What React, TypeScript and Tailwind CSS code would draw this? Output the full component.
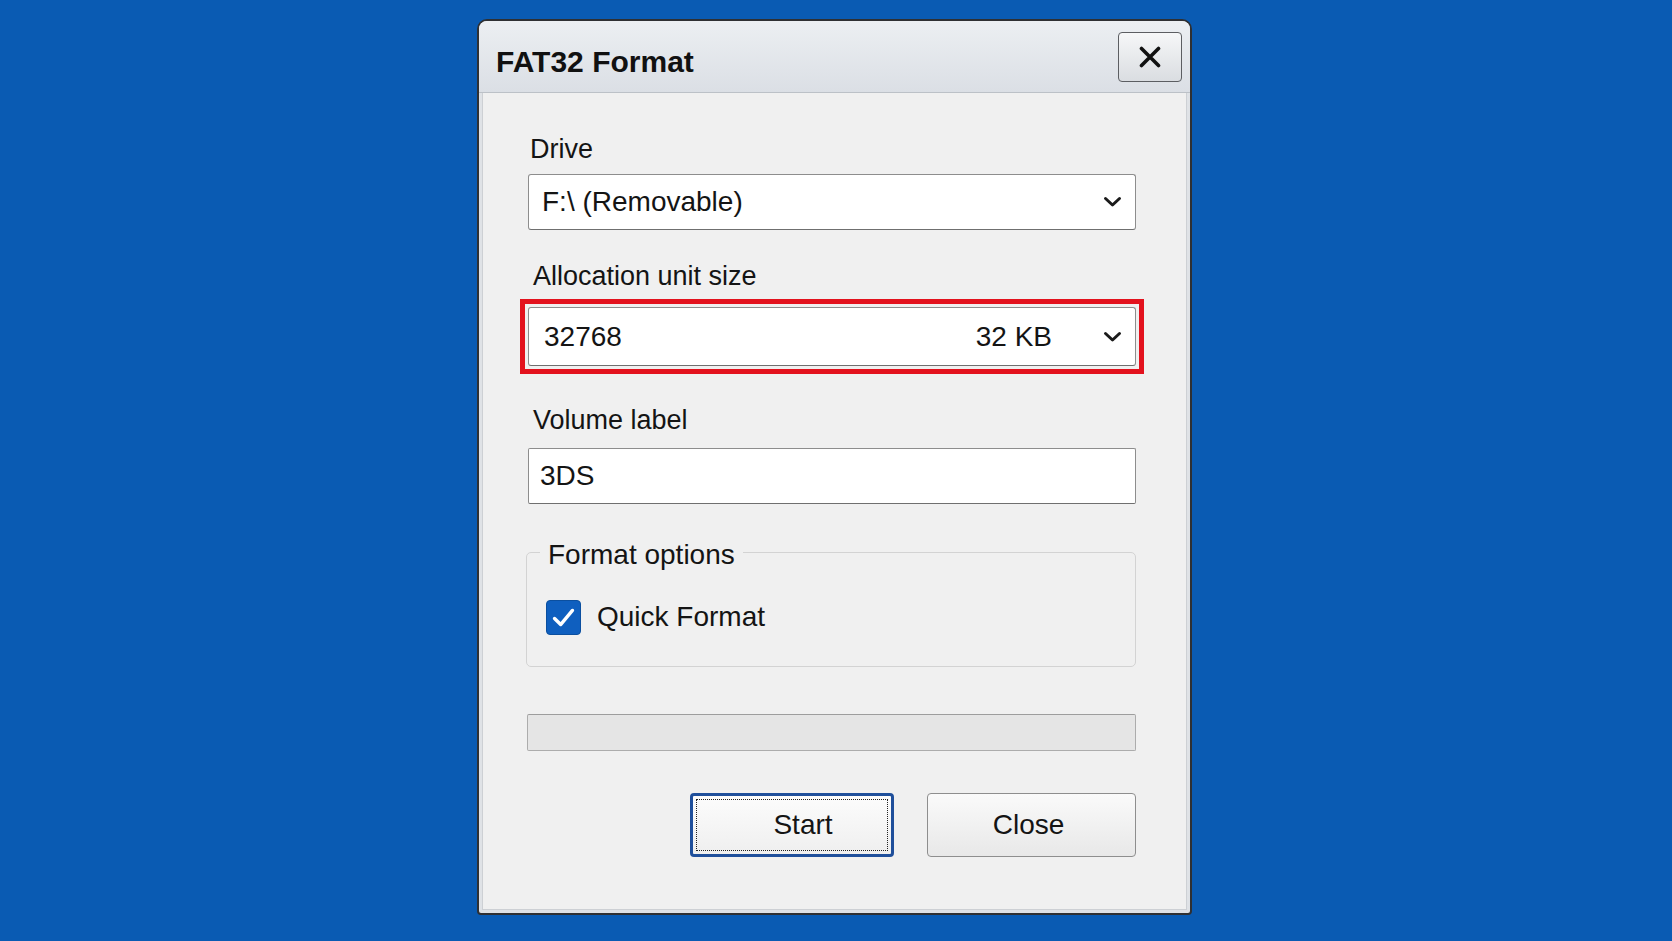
import React from 'react'

// FAT32 Format dialog on a blue desktop

function Chevron() {
    return (
        <svg width="19" height="12" viewBox="0 0 19 12" className="shrink-0">
            <path d="M2.5 2.5 L9.5 9 L16.5 2.5" fill="none" stroke="#1b1b1b" strokeWidth="3" strokeLinecap="round" strokeLinejoin="round" />
        </svg>
    );
}

function SelectBox({ children, height = 'h-[56px]', pl = 'pl-[13px]' }: { children: React.ReactNode; height?: string; pl?: string }) {
    return (
        <div className={`${height} ${pl} pr-[13px] w-full flex items-center bg-white border border-[#8d8d8d] border-b-[#6f6f6f] rounded-[3px] text-[28px] text-[#141414]`}>
            {children}
            <Chevron />
        </div>
    );
}

function Label({ children, className = '' }: { children: React.ReactNode; className?: string }) {
    return <div className={`text-[27px] leading-[32px] text-[#141414] ${className}`}>{children}</div>;
}

export default function App() {
    return (
        <div className="w-[1672px] h-[941px] bg-[#0a5bb3] font-['Liberation_Sans',Arial,sans-serif] pt-[19px] pl-[477px] overflow-hidden">
            <div className="w-[715px] h-[896px] flex flex-col border-2 border-[#2f3033] rounded-t-[10px] rounded-b-[4px] bg-[#dfe2e6] overflow-hidden">
                {/* Title bar */}
                <div className="h-[72px] shrink-0 flex items-center justify-between pl-[17px] pr-[8px] bg-gradient-to-b from-[#eceff2] to-[#dbdfe5] border-b border-[#bcc1c7]">
                    <span className="mt-[9px] text-[30px] font-bold text-[#111]">FAT32 Format</span>
                    <button className="w-[64px] h-[50px] flex items-center justify-center rounded-[4px] border-[1.5px] border-[#5c5e62] bg-gradient-to-b from-[#f6f7f8] to-[#dadde1]">
                        <svg width="24" height="22" viewBox="0 0 24 22">
                            <path d="M3.5 2.5 L20.5 19.5 M20.5 2.5 L3.5 19.5" stroke="#111" strokeWidth="3.6" strokeLinecap="round" />
                        </svg>
                    </button>
                </div>

                {/* Body */}
                <div className="flex-1 mx-[3px] mb-[3px] bg-[#f0f0f0] border border-t-0 border-[#cdd0d4] pl-[45px] pt-[40px]">
                    <div className="w-[608px] flex flex-col">
                        <Label className="pl-[2px]">Drive</Label>
                        <div className="mt-[9px]">
                            <SelectBox>
                                <span className="flex-1">F:\ (Removable)</span>
                            </SelectBox>
                        </div>

                        <Label className="mt-[30px] pl-[5px]">Allocation unit size</Label>
                        <div className="mt-[7px] -mx-[8px] border-[5px] border-[#e3121d] p-[3px]">
                            <SelectBox height="h-[59px]" pl="pl-[15px]">
                                <span className="flex-1">32768</span>
                                <span className="mr-[51px]">32 KB</span>
                            </SelectBox>
                        </div>

                        <Label className="mt-[30px] pl-[5px]">Volume label</Label>
                        <div className="mt-[12px] h-[56px] pl-[11px] flex items-center bg-white border border-[#8d8d8d] border-b-[#6f6f6f] rounded-[2px] text-[28px] text-[#141414]">
                            3DS
                        </div>

                        <fieldset className="mt-[29px] -ml-[2px] border border-[#d3d3d3] rounded-[5px] pt-[25px] pb-[28px] pl-0">
                            <legend className="ml-[13px] px-[8px] pt-[6px] text-[28px] leading-[32px] text-[#141414]">Format options</legend>
                            <label className="ml-[19px] flex items-center gap-[16px]">
                                <span className="w-[35px] h-[35px] rounded-[4px] bg-[#0f5fbf] border border-[#0b4f9f] flex items-center justify-center">
                                    <svg width="35" height="35" viewBox="0 0 35 35">
                                        <path d="M8 18.5 L14.5 25 L27 10" fill="none" stroke="#fff" strokeWidth="3.6" strokeLinecap="round" strokeLinejoin="round" />
                                    </svg>
                                </span>
                                <span className="text-[28px] text-[#141414]">Quick Format</span>
                            </label>
                        </fieldset>

                        <div className="mt-[47px] -ml-[1px] h-[37px] bg-[#e5e5e5] border border-[#acacac] border-t-[#9d9d9d] rounded-[2px]" />

                        <div className="mt-[42px] flex justify-end gap-[33px]">
                            <button className="w-[204px] h-[64px] rounded-[4px] border-[3px] border-[#1f4f9b] bg-gradient-to-b from-[#fcfcfc] to-[#efefef] p-[3px] flex">
                                <span className="flex-1 border border-dotted border-[#222] flex items-center justify-center pl-[22px] text-[28px] text-[#141414]">
                                    Start
                                </span>
                            </button>
                            <button className="w-[209px] h-[64px] rounded-[4px] border border-[#8e8e8e] bg-gradient-to-b from-[#fafafa] to-[#e8e8e8] flex items-center justify-center pr-[6px] text-[28px] text-[#141414]">
                                Close
                            </button>
                        </div>
                    </div>
                </div>
            </div>
        </div>
    );
}
